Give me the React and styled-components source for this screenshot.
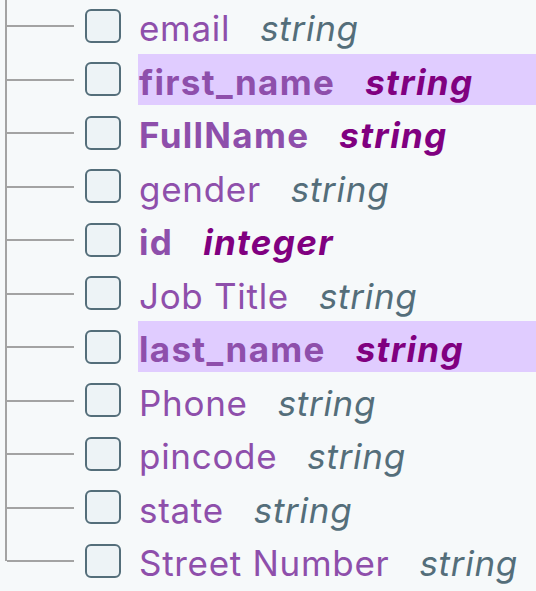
import styled, { createGlobalStyle } from "styled-components";

const GlobalStyle = createGlobalStyle`
  html, body {
    margin: 0;
    padding: 0;
    background: #f6f9fa;
    font-family: Inter, "Noto Sans", sans-serif;
  }
`;

const Tree = styled.ul`
  list-style: none;
  margin: -1px 0 0 5px;
  padding: 0;
  width: 531px;
  overflow: hidden;
`;

const Row = styled.li`
  position: relative;
  display: flex;
  align-items: center;
  height: 53.5px;
  padding-left: 80px;

  /* tree connectors */
  &::before {
    content: "";
    position: absolute;
    left: 0;
    top: 0;
    width: 2px;
    height: ${(p) => (p.$last ? "27px" : "100%")};
    background: #a3a3a3;
  }
  &::after {
    content: "";
    position: absolute;
    left: 2px;
    top: 26px;
    width: 67px;
    height: 2px;
    background: #a3a3a3;
  }
`;

const Box = styled.span`
  flex: none;
  width: 32px;
  height: 30px;
  border: 2.5px solid #546e7a;
  border-radius: 6px;
  background: #edf3f6;
`;

const Label = styled.span`
  display: flex;
  align-items: center;
  align-self: center;
  box-sizing: border-box;
  height: 51px;
  margin-left: 17px;
  padding: 5px 0 0 1px;
  flex: 1;
  white-space: nowrap;
  font-size: 35px;
  letter-spacing: ${(p) => (p.$bold ? "1.3px" : "0.7px")};
  background: ${(p) => (p.$hl ? "#e0ccff" : "transparent")};
`;

const Name = styled.span`
  color: #8e4fab;
  font-weight: ${(p) => (p.$bold ? 700 : 400)};
  margin-right: 30px;
`;

const Type = styled.span`
  font-style: italic;
  font-weight: ${(p) => (p.$bold ? 700 : 400)};
  color: ${(p) => (p.$bold ? "#800080" : "#546e7a")};
`;

const fields = [
  { name: "email", type: "string" },
  { name: "first_name", type: "string", bold: true, hl: true },
  { name: "FullName", type: "string", bold: true },
  { name: "gender", type: "string" },
  { name: "id", type: "integer", bold: true },
  { name: "Job Title", type: "string" },
  { name: "last_name", type: "string", bold: true, hl: true },
  { name: "Phone", type: "string" },
  { name: "pincode", type: "string" },
  { name: "state", type: "string" },
  { name: "Street Number", type: "string" },
];

export default function App() {
  return (
    <>
      <GlobalStyle />
      <Tree>
        {fields.map((f, i) => (
          <Row key={f.name} $last={i === fields.length - 1}>
            <Box />
            <Label $hl={f.hl} $bold={f.bold}>
              <Name $bold={f.bold}>{f.name}</Name>
              <Type $bold={f.bold}>{f.type}</Type>
            </Label>
          </Row>
        ))}
      </Tree>
    </>
  );
}
